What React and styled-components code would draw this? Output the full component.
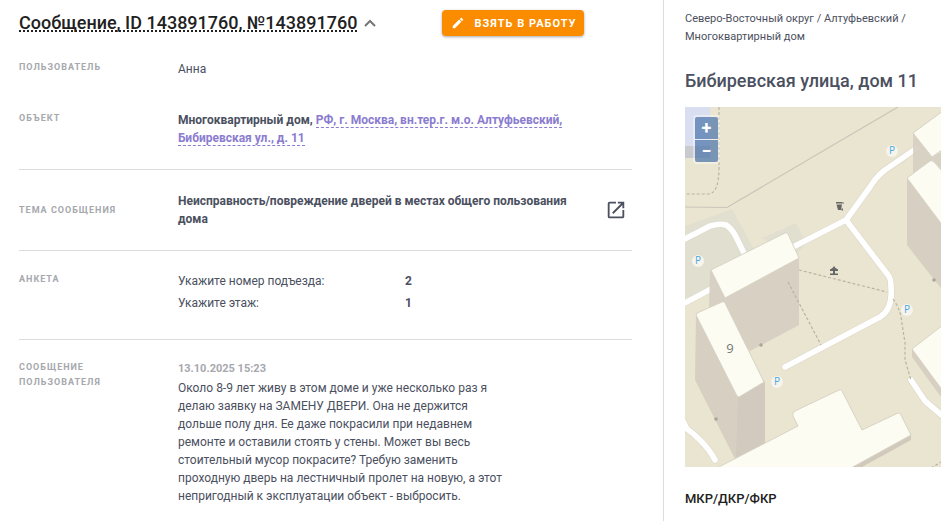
import styled, { createGlobalStyle } from 'styled-components';
import { MdEdit, MdOpenInNew } from 'react-icons/md';

const GlobalStyle = createGlobalStyle`
    * {
        box-sizing: border-box;
    }
    body {
        margin: 0;
        background: #fff;
        color: #4b5060;
        font-family: Roboto, "Liberation Sans", sans-serif;
        font-size: 12px;
        line-height: 18px;
    }
`

const Page = styled.div`
    display: grid;
    grid-template-columns: minmax(0, 1fr) 278px;
    min-height: 100vh;
`

const Main = styled.main`
    padding: 10px 31px 14px 19px;
`

const Side = styled.aside`
    min-width: 0;
    padding: 10px 0 12px 21px;
    border-left: 1px solid #dcdcdc;
`

const Header = styled.header`
    display: flex;
    align-items: center;
    gap: 7px;
    margin-bottom: 24px;
`

const Title = styled.h1`
    margin: 0;
    font-size: 18px;
    line-height: 26px;
    font-weight: 500;
    color: #212121;
    text-decoration: underline dotted 2px;
    text-decoration-skip-ink: none;
    text-underline-offset: 1px;
`

const CollapseButton = styled.button`
    display: flex;
    padding: 0;
    border: 0;
    background: none;
    color: #757575;
    cursor: pointer;
`

const TakeButton = styled.button`
    display: flex;
    align-items: center;
    gap: 9px;
    height: 26px;
    margin-left: 59px;
    padding: 0 8px 0 9px;
    border: 0;
    border-radius: 4px;
    background: #fb8c00;
    box-shadow: 0 1px 3px rgba(0, 0, 0, 0.35);
    color: #fff;
    font-family: inherit;
    font-size: 11px;
    font-weight: 700;
    letter-spacing: 1px;
    text-transform: uppercase;
    cursor: pointer;
`

const Row = styled.section`
    display: grid;
    grid-template-columns: 159px minmax(0, 1fr) auto;
    align-items: ${({ $center }) => $center ? 'center' : 'start'};
    padding: ${({ $pad }) => $pad};
    ${({ $line }) => $line && 'border-bottom: 1px solid #dcdcdc;'}
`

const Label = styled.h2`
    max-width: 120px;
    margin: 0;
    font-size: 9px;
    line-height: 15px;
    font-weight: 700;
    letter-spacing: 1px;
    text-transform: uppercase;
    color: #a6a8ae;
`

const Value = styled.div`
    font-weight: ${({ $bold }) => $bold ? 700 : 400};
`

const ObjectLink = styled.a`
    color: #8a7ccf;
    text-decoration: none;
    border-bottom: 1px dashed #8a7ccf;
`

const OpenLink = styled.a`
    display: flex;
    margin: 0 5px 0 10px;
    color: #4b5060;
`

const Survey = styled.dl`
    display: grid;
    grid-template-columns: 227px 1fr;
    row-gap: 4px;
    margin: 0;

    dd {
        margin: 0;
        font-weight: 700;
    }
`

const MessageDate = styled.time`
    display: block;
    margin-bottom: 1px;
    font-size: 11px;
    font-weight: 700;
    color: #a6a8ae;
`

const MessageText = styled.p`
    max-width: 332px;
    margin: 0;
`

const Crumbs = styled.nav`
    max-width: 240px;
    margin-bottom: 23px;
    font-size: 11px;
`

const Address = styled.h2`
    margin: 0 0 14px;
    font-size: 18px;
    line-height: 24px;
    font-weight: 500;
`

const MapBox = styled.div`
    position: relative;
    height: 360px;
    overflow: hidden;
    background: #eae5d1;

    svg {
        display: block;
        width: 100%;
        height: 100%;
    }
`

const ZoomBox = styled.div`
    position: absolute;
    top: 8px;
    left: 8px;
    display: grid;
    gap: 1px;
    padding: 2px;
    border-radius: 4px;
    background: rgba(255, 255, 255, 0.4);
`

const ZoomButton = styled.button`
    width: 23px;
    height: 22px;
    padding: 0;
    border: 0;
    border-radius: ${({ $top }) => $top ? '2px 2px 0 0' : '0 0 2px 2px'};
    background: rgba(0, 60, 136, 0.5);
    color: #fff;
    font-family: inherit;
    font-size: 18px;
    line-height: 20px;
    font-weight: 700;
    cursor: pointer;
`

const SectionTitle = styled.h3`
    margin: 23px 0 0;
    font-size: 13px;
    font-weight: 500;
    color: #212121;
`

const parkings = [[13, 154], [207, 44], [92, 275], [222, 203]];

const roads = [
    'M-4 134L25 119Q35 116 41 118Q46 121 50 128L60 148',
    'M106 141L161 113',
    'M161 113L185 80Q191 70 200 63L232 41',
    'M161 113L203 168Q206 171 206 180Q208 202 195 210L100 260',
    'M-4 198L28 181',
    'M-3 312L2 322Q8 326 15 333Q25 343 30 353',
    'M226 273L240 294L260 311'
];

const paths = [
    'M34 0V60Q34 87 23 87H0',
    'M114 163L202 185',
    'M103 175L136 238',
    'M208 192Q214 200 216 210L220 236V253L226 273',
    'M246 361L258 354'
];

const StreetMap = () => <svg viewBox="0 0 256 360" preserveAspectRatio="xMinYMin slice" role="img" aria-label="Карта">
    <path d="M0 0H25V39H0Z" fill="#d9def0" />
    <path d="M0 39H25V51H0Z" fill="#c8cad0" />
    <path d="M0 119L47 102L72 148L30 178L0 197Z" fill="#e1dfd0" />
    <path d="M77 131L111 116L121 136L110 150Z" fill="#e1dfd0" />
    <path d="M0 100L42 100.500L126 51L213 0" fill="none" stroke="#c9c5b9" strokeWidth="1.200" />
    <g fill="none" strokeLinecap="round" strokeLinejoin="round">
        {roads.map(d => <path key={d} d={d} stroke="#dedacb" strokeWidth="7" />)}
        {roads.map(d => <path key={d} d={d} stroke="#fff" strokeWidth="5.600" />)}
    </g>

    {/* walls */}
    <g fill="#d6cfc2">
        <path d="M25 164L114 152V218L65 244L24 200Z" fillOpacity="0.95" />
        <path d="M11 206L53 240L80 275V337L50 352L10 273Z" />
        <path d="M228 26L247 50L256 45V75L228 72Z" fillOpacity="0.9" />
        <path d="M222 71L256 110V181L247 170L222 138Z" />
        <path d="M227 242L256 270V290L227 250Z" />
        <path d="M226 326V333L177 360H160Z" fill="#d1c9bb" />
    </g>
    <path d="M53 290L80 275V337L51 352Z" fill="#cfc7ba" fillOpacity="0.6" />
    <g fill="none" stroke="#b9b3a4" strokeWidth="1.200" strokeDasharray="3 2">
        {paths.map(d => <path key={d} d={d} />)}
    </g>

    {/* roofs */}
    <g fill="#fcfcf3" stroke="#d8d3c5" strokeWidth="1" strokeLinejoin="round">
        <path d="M26 163L100 126Q102 125 103 127L114 151L40 191Z" />
        <path d="M12 206L37 195Q39 194 40 196L79 275L54 290Q53 290 52 289L11 208Z" />
        <path d="M228 26L258 4V42L247 50Z" />
        <path d="M222 71L245 54Q247 53 249 55L258 65V119Z" />
        <path d="M227 242L258 218V284Z" />
        <path d="M32 361L113 319L108 309Q107 306 110 304L154 283Q156 282 157 284L177 323L213 306Q214 305 216 308L226 328L166 361Z" />
    </g>
    <g fill="#aaa59a">
        <circle cx="76" cy="238" r="1.800" />
        <circle cx="31" cy="312" r="1.800" />
        <circle cx="249" cy="173" r="1.800" />
    </g>
    <text x="45" y="246" textAnchor="middle" fontFamily="Open Sans, sans-serif" fontSize="13" fill="#777">9</text>

    {/* litter bin and gazebo */}
    <g fill="#666">
        <path d="M151 95H157V96.500H151ZM151.500 97.500H157L156 103H153Z" />
        <path d="M157.500 95H158.500V97H157.500ZM156.500 101.500H158V103.500H156.500Z" />
        <path d="M149 159L150.500 161L153 162.500V164H145V162.500L147.500 161ZM148 164H150V166.500H148ZM145 166.500H153V168H145Z" />
    </g>
    {parkings.map(([x, y]) => <g key={`${x}-${y}`}>
        <circle cx={x} cy={y} r="6" fill="#f6f4ec" />
        <text x={x} y={y + 3} textAnchor="middle" fontFamily="Open Sans, sans-serif" fontSize="10" fill="#4aa8e6">P</text>
    </g>)}
</svg>

const App = () => {
    return <>
        <GlobalStyle />
        <Page>
            <Main>
                <Header>
                    <Title>Сообщение, ID 143891760, №143891760</Title>
                    <CollapseButton aria-label="Свернуть">
                        <svg width="12" height="8" viewBox="0 0 12 8" fill="none" stroke="currentColor" strokeWidth="2">
                            <path d="M1 7L6 2L11 7" />
                        </svg>
                    </CollapseButton>
                    <TakeButton>
                        <MdEdit size={14} />
                        Взять в работу
                    </TakeButton>
                </Header>
                <Row $pad="0 0 33px">
                    <Label>Пользователь</Label>
                    <Value>Анна</Value>
                </Row>
                <Row $pad="0 0 22px" $line>
                    <Label>Объект</Label>
                    <Value $bold>
                        Многоквартирный дом, <ObjectLink href="#object">РФ, г. Москва, вн.тер.г. м.о. Алтуфьевский, Бибиревская ул., д. 11</ObjectLink>
                    </Value>
                </Row>
                <Row $pad="22px 0" $center $line>
                    <Label>Тема сообщения</Label>
                    <Value $bold>Неисправность/повреждение дверей в местах общего пользования дома</Value>
                    <OpenLink href="#topic" aria-label="Открыть тему">
                        <MdOpenInNew size={22} />
                    </OpenLink>
                </Row>
                <Row $pad="21px 0 27px" $line>
                    <Label>Анкета</Label>
                    <Survey>
                        <dt>Укажите номер подъезда:</dt>
                        <dd>2</dd>
                        <dt>Укажите этаж:</dt>
                        <dd>1</dd>
                    </Survey>
                </Row>
                <Row $pad="20px 0 0">
                    <Label>Сообщение пользователя</Label>
                    <Value>
                        <MessageDate>13.10.2025 15:23</MessageDate>
                        <MessageText>
                            Около 8-9 лет живу в этом доме и уже несколько раз я делаю заявку на ЗАМЕНУ ДВЕРИ. Она не держится дольше полу дня. Ее даже покрасили при недавнем ремонте и оставили стоять у стены. Может вы весь стоительный мусор покрасите? Требую заменить проходную дверь на лестничный пролет на новую, а этот непригодный к эксплуатации объект - выбросить.
                        </MessageText>
                    </Value>
                </Row>
            </Main>
            <Side>
                <Crumbs>Северо-Восточный округ / Алтуфьевский / Многоквартирный дом</Crumbs>
                <Address>Бибиревская улица, дом 11</Address>
                <MapBox>
                    <StreetMap />
                    <ZoomBox>
                        <ZoomButton $top aria-label="Приблизить">+</ZoomButton>
                        <ZoomButton aria-label="Отдалить">−</ZoomButton>
                    </ZoomBox>
                </MapBox>
                <SectionTitle>МКР/ДКР/ФКР</SectionTitle>
            </Side>
        </Page>
    </>
}

export default App;
